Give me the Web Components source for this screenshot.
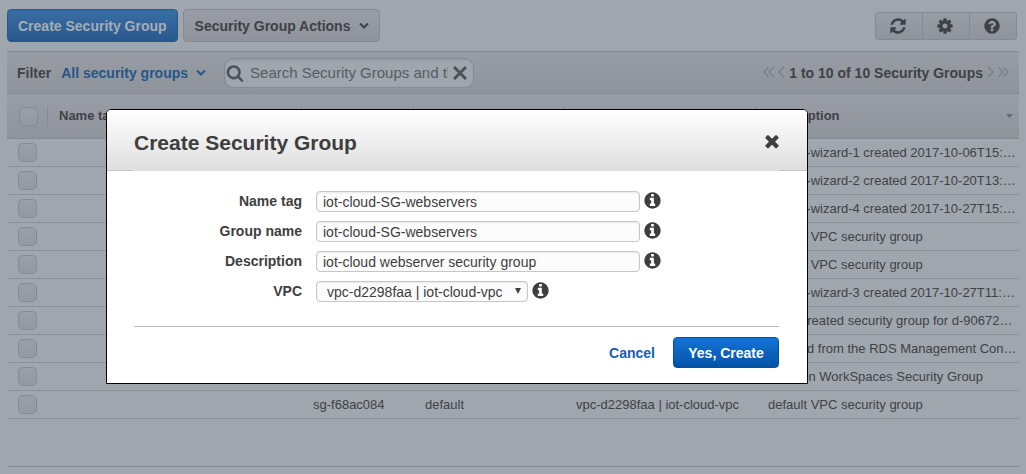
<!DOCTYPE html>
<html lang="en">
<head>
<meta charset="utf-8">
<meta name="viewport" content="width=device-width, initial-scale=1">
<title>Security Groups</title>
<style>
html, body { margin: 0; min-height: 100%; }
body {
  background: #9fa6ad;
  color: #3f4246;
  font: 14px/20px "Liberation Sans", Arial, sans-serif;
  overflow: hidden;
}
</style>
</head>
<body>
<console-page>
  <action-bar slot="actions">
    <console-button variant="primary">Create Security Group</console-button>
    <console-button menu>Security Group Actions</console-button>
    <tool-group slot="tools"></tool-group>
  </action-bar>
  <filter-bar slot="filter"></filter-bar>
  <group-table></group-table>
</console-page>
<modal-dialog heading="Create Security Group">
  <form-field label="Name tag" value="iot-cloud-SG-webservers"></form-field>
  <form-field label="Group name" value="iot-cloud-SG-webservers"></form-field>
  <form-field label="Description" value="iot-cloud webserver security group"></form-field>
  <form-field label="VPC" type="select" value="vpc-d2298faa | iot-cloud-vpc"></form-field>
  <a-link slot="footer">Cancel</a-link>
  <console-button slot="footer" variant="confirm">Yes, Create</console-button>
</modal-dialog>

<script>
const DISC = 'm640 416q0 209-103 385.5t-279.5 279.5-385.5 103-385.5-103-279.5-279.5-103-385.5 103-385.5 279.5-279.5 385.5-103 385.5 103 279.5 279.5 103 385.5z';
const ICONS = {
  refresh: 'M1639 1056q0 5-1 7-64 268-268 434.5t-478 166.5q-146 0-282.5-55t-243.5-157l-129 129q-19 19-45 19t-45-19-19-45v-448q0-26 19-45t45-19h448q26 0 45 19t19 45-19 45l-137 137q71 66 161 102t187 36q134 0 250-65t186-179q11-17 53-117 8-23 30-23h192q13 0 22.5 9.5t9.5 22.5zm25-800v448q0 26-19 45t-45 19h-448q-26 0-45-19t-19-45 19-45l138-138q-148-137-349-137-134 0-250 65t-186 179q-11 17-53 117-8 23-30 23h-199q-13 0-22.5-9.5t-9.5-22.5v-7q65-268 270-434.5t480-166.5q146 0 284 55.5t245 156.5l130-129q19-19 45-19t45 19 19 45z',
  cog: 'M1152 896q0-106-75-181t-181-75-181 75-75 181 75 181 181 75 181-75 75-181zm512-109v222q0 12-8 23t-20 13l-185 28q-19 54-39 91 35 50 107 138 10 12 10 25t-9 23q-27 37-99 108t-94 71q-12 0-26-9l-138-108q-44 23-91 38-16 136-29 186-7 28-36 28h-222q-14 0-24.5-8.5t-11.5-21.5l-28-184q-49-16-90-37l-141 107q-10 9-25 9-14 0-25-11-126-114-165-168-7-10-7-23 0-12 8-23 15-21 51-66.5t54-70.5q-27-50-41-99l-183-27q-13-2-21-12.5t-8-23.5v-222q0-12 8-23t19-13l186-28q14-46 39-92-40-57-107-138-10-12-10-24 0-10 9-23 26-36 98.5-107.5t94.5-71.5q13 0 26 10l138 107q44-23 91-38 16-136 29-186 7-28 36-28h222q14 0 24.5 8.5t11.5 21.5l28 184q49 16 90 37l142-107q9-9 24-9 13 0 25 10 129 119 165 170 7 8 7 22 0 12-8 23-15 21-51 66.5t-54 70.5q26 50 41 98l183 28q13 2 21 12.5t8 23.5z',
  help: 'M1024 1376v-192q0-14-9-23t-23-9h-192q-14 0-23 9t-9 23v192q0 14 9 23t23 9h192q14 0 23-9t9-23zm256-672q0-88-55.5-163t-138.5-116-170-41q-243 0-371 213-15 24 8 42l132 100q7 6 19 6 16 0 25-12 53-68 86-92 34-24 86-24 48 0 85.5 26t37.5 59q0 38-20 61t-68 45q-63 28-115.5 86.5t-52.5 125.5v36q0 14 9 23t23 9h192q14 0 23-9t9-23q0-19 21.5-49.5t54.5-49.5q32-18 49-28.5t46-35 44.5-48 28-60.5 12.5-81zm384 192q0 209-103 385.5t-279.5 279.5-385.5 103-385.5-103-279.5-279.5-103-385.5 103-385.5 279.5-279.5 385.5-103 385.5 103 279.5 279.5 103 385.5z',
  info: 'M1152 1376v-160q0-14-9-23t-23-9h-96v-512q0-14-9-23t-23-9h-320q-14 0-23 9t-9 23v160q0 14 9 23t23 9h96v320h-96q-14 0-23 9t-9 23v160q0 14 9 23t23 9h448q14 0 23-9t9-23zm-128-896v-160q0-14-9-23t-23-9h-192q-14 0-23 9t-9 23v160q0 14 9 23t23 9h192q14 0 23-9t9-23z' + DISC,
  close: 'M1490 1322q0 40-28 68l-136 136q-28 28-68 28t-68-28l-294-294-294 294q-28 28-68 28t-68-28l-136-136q-28-28-28-68t28-68l294-294-294-294q-28-28-28-68t28-68l136-136q28-28 68-28t68 28l294 294 294-294q28-28 68-28t68 28l136 136q28 28 28 68t-28 68l-294 294 294 294q28 28 28 68z',
  search: 'M1216 832q0-185-131.5-316.5t-316.5-131.5-316.5 131.5-131.5 316.5 131.5 316.5 316.5 131.5 316.5-131.5 131.5-316.5zm512 832q0 52-38 90t-90 38q-54 0-90-38l-343-342q-179 124-399 124-143 0-273.5-55.5t-225-150-150-225-55.5-273.5 55.5-273.5 150-225 225-150 273.5-55.5 273.5 55.5 225 150 150 225 55.5 273.5q0 220-124 399l343 343q37 37 37 90z'
};
const icon = (name, size) =>
  `<svg width="${size}" height="${size}" viewBox="0 0 1792 1792" fill="currentColor" aria-hidden="true"><path d="${ICONS[name]}"/></svg>`;
const stroke = (d, w, h, width) =>
  `<svg width="${w}" height="${h}" viewBox="0 0 ${w} ${h}" fill="none" stroke="currentColor" stroke-width="${width}" aria-hidden="true"><path d="${d}"/></svg>`;

const BASE = `:host, *, *::before { box-sizing: border-box; } svg { display: block; flex: none; }
  button { font: inherit; color: inherit; margin: 0; padding: 0; background: none; border: 0; }`;

class Base extends HTMLElement {
  connectedCallback() {
    if (this.shadowRoot) return;
    this.attachShadow({ mode: 'open' }).innerHTML = `<style>${BASE}</style>` + this.view();
  }
}

customElements.define('console-page', class extends Base {
  view() {
    return `<style>
      :host { display: block; padding: 9px 7px 0; }
    </style><slot name="actions"></slot><slot name="filter"></slot><slot></slot>`;
  }
});

customElements.define('action-bar', class extends Base {
  view() {
    return `<style>
      :host { display: flex; align-items: center; gap: 5px; padding-bottom: 9px; }
      .tools { margin-left: auto; padding-right: 2px; }
    </style><slot></slot><div class="tools"><slot name="tools"></slot></div>`;
  }
});

customElements.define('console-button', class extends Base {
  view() {
    const menu = this.hasAttribute('menu') ? stroke('M1 1.5L5 5.5L9 1.5', 10, 8, 2) : '';
    return `<style>
      :host { display: block; }
      button {
        display: flex; align-items: center; justify-content: center; gap: 9px;
        height: 33px; padding: 0 10px;
        font-weight: bold; white-space: nowrap;
        border: 1px solid #858a93; border-radius: 4px;
        background: linear-gradient(#999da5, #8f939b);
        color: #3e4146;
      }
      :host([menu]) button { padding-left: 11px; }
      :host([variant="primary"]) button {
        background: linear-gradient(#396ea5, #29588c);
        border-color: #28578b; color: #a6adb5;
      }
      :host([variant="confirm"]) button {
        height: 31px; min-width: 106px; padding: 0 14px;
        background: linear-gradient(#1573d4, #0353a8);
        border-color: #034f9f; color: #fff;
      }
    </style><button type="button"><slot></slot>${menu}</button>`;
  }
});

customElements.define('a-link', class extends Base {
  view() {
    return `<style>
      :host { display: block; }
      a { color: #1360b8; font-weight: bold; text-decoration: none; }
    </style><a href="#"><slot></slot></a>`;
  }
});

customElements.define('tool-group', class extends Base {
  view() {
    return `<style>
      :host { display: flex; border: 1px solid #858a93; border-radius: 3px;
        background: linear-gradient(#999da5, #8f949b); color: #3e4146; }
      button { display: grid; place-items: center; width: 46px; height: 26px; padding-right: 2px; }
      button + button { width: 47px; border-left: 1px solid #858a93; }
    </style>
    <button type="button" aria-label="Refresh">${icon('refresh', 18)}</button>
    <button type="button" aria-label="Settings">${icon('cog', 18)}</button>
    <button type="button" aria-label="Help">${icon('help', 18)}</button>`;
  }
});

customElements.define('filter-bar', class extends Base {
  view() {
    return `<style>
      :host {
        display: flex; align-items: center; height: 43px; padding: 0 10px;
        border: solid #858a93; border-width: 1px 0;
        background: linear-gradient(#989da5, #8f949b);
        font-weight: bold;
      }
      .scope { display: flex; align-items: center; gap: 8px; margin: 0 18px 0 10px; color: #24568a; }
      .search {
        display: flex; align-items: center; width: 250px; height: 30px; padding: 0 6px 0 1px;
        border: 1px solid #858a93; border-radius: 9px; background: #9fa6ad;
        box-shadow: inset 0 1px 2px #9297a0; color: #4d5158;
      }
      input {
        flex: 1; min-width: 0; margin: 0 5px 0 6px; padding: 0; border: 0; outline: 0;
        background: none; font: inherit; font-size: 15px; font-weight: normal; color: #3e4146;
      }
      input::placeholder { color: #565c63; opacity: 1; }
      .pager { display: flex; align-items: center; gap: 4px; margin-left: auto; color: #7b8088; }
      .pager span { color: #3e4146; }
    </style>
    <span>Filter</span>
    <button class="scope" type="button">All security groups ${stroke('M1 1.5L5 5.5L9 1.5', 10, 8, 2)}</button>
    <div class="search">
      ${icon('search', 18)}
      <input type="text" aria-label="Search" placeholder="Search Security Groups and their attributes">
      <button type="button" aria-label="Clear">${stroke('M1 1L13 13M13 1L1 13', 14, 14, 3)}</button>
    </div>
    <div class="pager">
      <button type="button" aria-label="First page">${stroke('M5.5 1L1 6L5.5 11M10.5 1L6 6L10.5 11', 11, 14, 1.5)}</button>
      <button type="button" aria-label="Previous page">${stroke('M6 1L1 6L6 11', 7, 14, 1.5)}</button>
      <span>1 to 10 of 10 Security Groups</span>
      <button type="button" aria-label="Next page">${stroke('M1 1L6 6L1 11', 7, 14, 1.5)}</button>
      <button type="button" aria-label="Last page">${stroke('M.5 1L5 6L.5 11M5.5 1L10 6L5.5 11', 11, 14, 1.5)}</button>
    </div>`;
  }
});

customElements.define('group-table', class extends Base {
  view() {
    const rows = [
      ['', '', '', 'launch-wizard-1 created 2017-10-06T15:…'],
      ['', '', '', 'launch-wizard-2 created 2017-10-20T13:…'],
      ['', '', '', 'launch-wizard-4 created 2017-10-27T15:…'],
      ['', '', '', 'default VPC security group'],
      ['', '', '', 'default VPC security group'],
      ['', '', '', 'launch-wizard-3 created 2017-10-27T11:…'],
      ['', '', '', 'AWS created security group for d-90672…'],
      ['', '', '', 'Created from the RDS Management Con…'],
      ['', '', '', 'Amazon WorkSpaces Security Group'],
      ['sg-f68ac084', 'default', 'vpc-d2298faa | iot-cloud-vpc', 'default VPC security group']
    ];
    const body = rows.map((r, i) => `<tr>
      <td class="pick"><input type="checkbox" aria-label="Select row ${i + 1}"></td><td></td>
      ${r.map(c => `<td>${c}</td>`).join('')}</tr>`).join('');
    return `<style>
      :host { display: block; padding-bottom: 47px; border-bottom: 1px solid #858a93; font-size: 13px; }
      table { width: 100%; table-layout: fixed; border-collapse: separate; border-spacing: 0; }
      .c0 { width: 40px; } .c1 { width: 254px; } .c2 { width: 112px; }
      .c3 { width: 151px; } .c4 { width: 192px; }
      thead tr { background: linear-gradient(#999ea6, #8f949b); }
      th, td { padding: 0 0 0 12px; text-align: left; border-bottom: 1px solid #8c9099;
        white-space: nowrap; overflow: hidden; text-overflow: ellipsis; }
      th { height: 45px; border-color: #858a93; }
      th + th { background: linear-gradient(#858a93, #858a93) 0 50% / 1px 20px no-repeat; }
      td { height: 28px; }
      .pick { padding: 0 0 0 11px; }
      th.pick { padding-left: 12px; }
      input {
        appearance: none; display: block; width: 19px; height: 19px; margin: 0;
        border: 1px solid #868a93; border-radius: 5px;
        background: linear-gradient(#9b9fa8, #94989f);
      }
      .sort { display: flex; align-items: center; justify-content: space-between; padding-right: 6px; }
      .sort svg { color: #666b73; }
    </style>
    <table>
      <colgroup><col class="c0"><col class="c1"><col class="c2"><col class="c3"><col class="c4"><col></colgroup>
      <thead><tr>
        <th class="pick"><input type="checkbox" aria-label="Select all"></th>
        <th>Name tag</th><th aria-label="Group ID"></th><th aria-label="Group Name"></th><th aria-label="VPC"></th>
        <th><div class="sort">Description
          <svg width="7" height="4" viewBox="0 0 7 4" fill="currentColor" aria-hidden="true"><path d="M0 0H7L3.5 4Z"/></svg></div></th>
      </tr></thead>
      <tbody>${body}</tbody>
    </table>`;
  }
});

customElements.define('modal-dialog', class extends Base {
  view() {
    return `<style>
      :host { position: absolute; inset: 0; padding: 109px 218px 0 106px; }
      section { border: 1px solid #000; border-radius: 5px 5px 0 0; background: #fff; color: #3e3e3e; }
      header {
        display: flex; align-items: center; justify-content: space-between;
        height: 61px; padding: 4px 25px 0 27px;
        border-radius: 4px 4px 0 0;
        background: linear-gradient(#c4c4c4, #c4c4c4) 0 100% / 25px 1px no-repeat,
          linear-gradient(#c4c4c4, #c4c4c4) 100% 100% / 28px 1px no-repeat,
          linear-gradient(#fff, #dedede);
      }
      header button { padding-bottom: 4px; }
      h1 { margin: 0; font-size: 21px; line-height: 24px; }
      .body { display: flex; flex-direction: column; gap: 8px; padding: 20px 27px 0; }
      footer {
        display: flex; align-items: center; justify-content: flex-end; gap: 18px;
        margin: 23px 28px 0 27px; padding: 10px 0 15px; border-top: 1px solid #b9b9b9;
      }
    </style>
    <section role="dialog" aria-label="${this.getAttribute('heading')}">
      <header><h1>${this.getAttribute('heading')}</h1>
        <button type="button" aria-label="Close">${icon('close', 20)}</button></header>
      <div class="body"><slot></slot></div>
      <footer><slot name="footer"></slot></footer>
    </section>`;
  }
});

customElements.define('form-field', class extends Base {
  view() {
    const value = this.getAttribute('value');
    const control = this.getAttribute('type') === 'select'
      ? `<span class="pick"><select id="f"><option>${value}</option></select>
          <svg width="6" height="6" viewBox="0 0 6 6" fill="currentColor" aria-hidden="true"><path d="M0 0H6L3 6Z"/></svg></span>`
      : `<input id="f" type="text" value="${value}">`;
    return `<style>
      :host { display: flex; align-items: flex-start; height: 22px; }
      label { width: 168px; margin-right: 14px; text-align: right; font-weight: bold; line-height: 20px; }
      input, select {
        display: block; height: 21px; margin: 0; padding: 0 6px;
        border: 1px solid #c6c6c6; border-radius: 4px; outline: 0;
        background: #fcfcfc; box-shadow: inset 0 1px 2px #e8e8e8;
        font: inherit; color: #3e3e3e;
      }
      input { flex: 0 1 324px; min-width: 0; }
      select { appearance: none; width: 212px; padding: 0 10px; }
      .pick { position: relative; }
      .pick svg { position: absolute; right: 7px; top: 7px; }
      button { margin: 0 0 0 3px; }
    </style>
    <label for="f">${this.getAttribute('label')}</label>${control}
    <button type="button" aria-label="About ${this.getAttribute('label')}">${icon('info', 19)}</button>`;
  }
});
</script>
</body>
</html>
